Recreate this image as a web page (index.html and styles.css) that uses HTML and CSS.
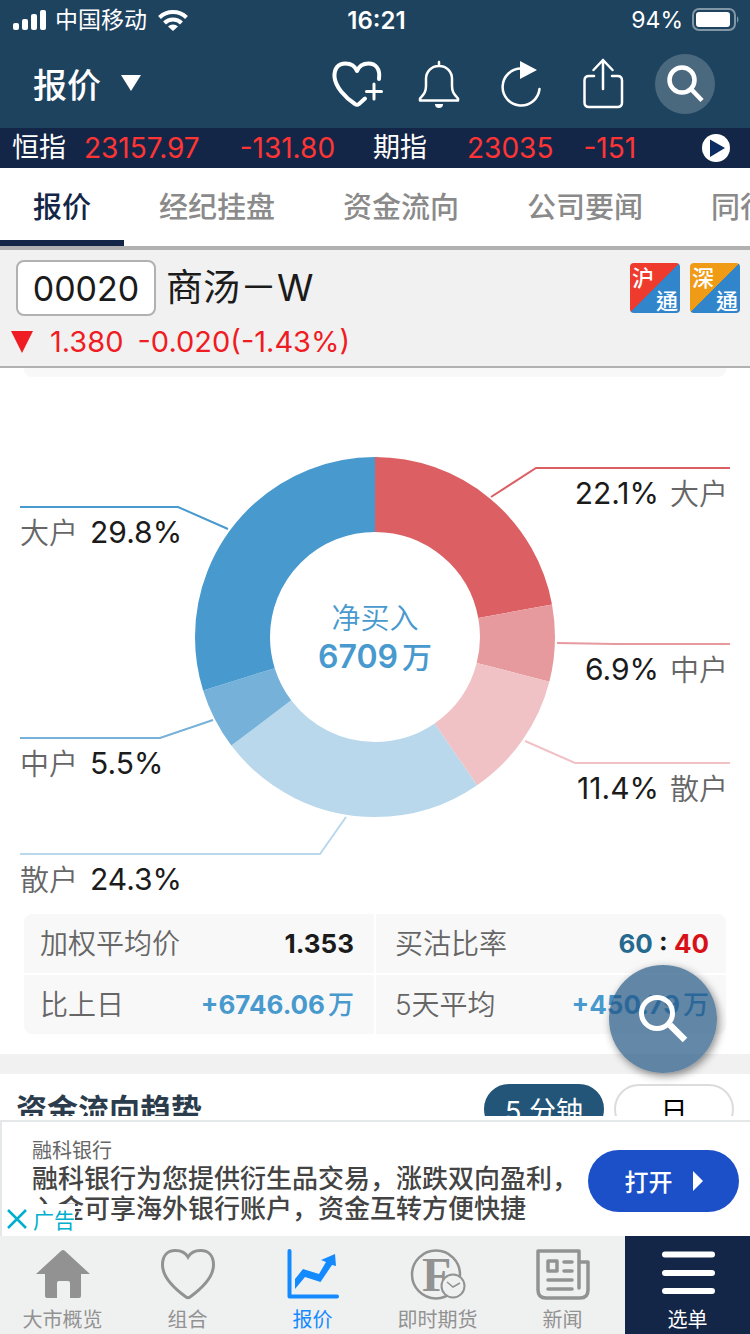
FILE: index.html
```html
<!DOCTYPE html>
<html lang="zh-CN">
<head>
<meta charset="utf-8">
<meta name="viewport" content="width=device-width, initial-scale=1">
<title>报价 - 商汤－W</title>
<link rel="stylesheet" href="styles.css">
</head>
<body>
<div class="app">
  <header class="top">
    <div class="status">
      <div class="status-left">
        <svg class="signal" viewBox="0 0 34 22" aria-hidden="true"><rect x="0" y="14" width="6" height="7" rx="2"/><rect x="9" y="10" width="6" height="11" rx="2"/><rect x="18" y="5" width="6" height="16" rx="2"/><rect x="27" y="1" width="6" height="20" rx="2"/></svg>
        <span class="carrier">中国移动</span>
        <svg class="wifi" viewBox="0 0 30 22" aria-hidden="true"><g fill="none" stroke="#fff" stroke-width="4"><path d="M1.500 8.500a19.500 19.500 0 0 1 27 0"/><path d="M6.500 14a12 12 0 0 1 17 0"/></g><path fill="#fff" d="M10 17.500a7 7 0 0 1 10 0L15 22z"/></svg>
      </div>
      <time class="clock">16:21</time>
      <div class="status-right">
        <span>94%</span>
        <svg class="battery" viewBox="0 0 48 24" aria-hidden="true"><rect x="1" y="1" width="42" height="21" rx="6" fill="none" stroke="#8197a5" stroke-width="2"/><rect x="4" y="4" width="34" height="15" rx="3" fill="#fff"/><path d="M45 8q3 3.500 0 7z" fill="#8197a5"/></svg>
      </div>
    </div>
    <div class="toolbar">
      <button class="picker" type="button">报价<svg viewBox="0 0 20 16" aria-hidden="true"><path d="M0 0h20L10 16z" fill="#fff"/></svg></button>
      <div class="actions">
        <button type="button" aria-label="加入组合"><svg viewBox="0 0 60 60"><path stroke-width="4" d="M52 25C53.500 14 48 9.500 41.500 9.500 36 9.500 32 12 30 17 28 12 24 9.500 18.500 9.500 11.500 9.500 7 14 7.500 23 8.500 33 18 43.500 28 50Q30 51.500 32 50L38 44.500"/><path stroke-width="3" d="M47 30v15M39.500 37.500h15"/></svg></button>
        <button type="button" aria-label="提醒"><svg viewBox="0 0 60 60"><path stroke-width="2.500" d="M30 8v4M30 12C22 12 17 18 17 25V32C17 38 15 40 11 44.500V46.500H49V44.500C45 40 43 38 43 32V25C43 18 38 12 30 12z"/><path fill="#fff" stroke="none" d="M26 50h8a4 4 0 0 1-8 0z"/></svg></button>
        <button type="button" aria-label="刷新"><svg viewBox="0 0 60 60"><path stroke-width="2.500" d="M30 14.500A18.500 18.500 0 1 0 48.500 35"/><path fill="#fff" stroke="none" d="M29 7l17 9-17 9z"/></svg></button>
        <button type="button" aria-label="分享"><svg viewBox="0 0 60 60"><path stroke-width="2.500" d="M21 22h-5q-4.500 0-4.500 4.500v22q0 4.500 4.500 4.500h28.500q4.500 0 4.500-4.500v-22q0-4.500-4.500-4.500h-5.500M30 35V6M20.500 16L30 6l9.500 10"/></svg></button>
        <button class="round" type="button" aria-label="搜索"><svg viewBox="0 0 60 60"><circle cx="27" cy="26" r="12.500" stroke-width="4.500"/><path stroke-width="4.500" stroke-linecap="butt" d="M36 35l11 11.500"/></svg></button>
      </div>
    </div>
  </header>

  <div class="ticker">
    <div class="index"><span>恒指</span><b>23157.97</b></div>
    <b class="move">-131.80</b>
    <div class="index future"><span>期指</span><b>23035</b></div>
    <b class="move">-151</b>
    <button class="play" type="button" aria-label="播放"><svg viewBox="0 0 28 28"><circle cx="14" cy="14" r="14" fill="#fff"/><path d="M8 5.500L23 14 8 23z" fill="#0b2b63"/></svg></button>
  </div>

  <nav class="tabs">
    <a class="tab current" href="#quote">报价</a>
    <a class="tab" href="#broker">经纪挂盘</a>
    <a class="tab" href="#flow">资金流向</a>
    <a class="tab" href="#news">公司要闻</a>
    <a class="tab" href="#peers">同行比较</a>
  </nav>

  <section class="stock">
    <div class="stock-name">
      <input class="code" type="text" value="00020" aria-label="股票代号">
      <h1>商汤－W</h1>
      <div class="badges" lang="zh-TW">
        <span class="badge red"><i>沪</i><i>通</i></span>
        <span class="badge orange"><i>深</i><i>通</i></span>
      </div>
    </div>
    <div class="price"><svg viewBox="0 0 24 24" aria-hidden="true"><path d="M1 1h22L12 23z"/></svg><span class="last">1.380</span><span>-0.020(-1.43%)</span></div>
  </section>

  <main class="content">
    <div class="sheet">
      <div class="card-end"></div>
      <svg class="chart" viewBox="0 0 750 537" role="img" aria-label="净买入 6709 万">
        <g class="ring" transform="rotate(-90 375 260)">
          <circle class="r1" cx="375" cy="260" r="142.500" pathLength="100" stroke-dasharray="22.100 77.900"/>
          <circle class="r2" cx="375" cy="260" r="142.500" pathLength="100" stroke-dasharray="6.900 93.100" stroke-dashoffset="-22.100"/>
          <circle class="r3" cx="375" cy="260" r="142.500" pathLength="100" stroke-dasharray="11.400 88.600" stroke-dashoffset="-29"/>
          <circle class="b3" cx="375" cy="260" r="142.500" pathLength="100" stroke-dasharray="24.300 75.700" stroke-dashoffset="-40.400"/>
          <circle class="b2" cx="375" cy="260" r="142.500" pathLength="100" stroke-dasharray="5.500 94.500" stroke-dashoffset="-64.700"/>
          <circle class="b1" cx="375" cy="260" r="142.500" pathLength="100" stroke-dasharray="29.800 70.200" stroke-dashoffset="-70.200"/>
        </g>
        <g class="leaders">
          <path class="r1" d="M491 120l45-29h194"/>
          <path class="r2" d="M557 266l58 1h115"/>
          <path class="r3" d="M525 364l50 22h155"/>
          <path class="b1" d="M228 152l-50-22H20"/>
          <path class="b2" d="M213 343l-53 18H20"/>
          <path class="b3" d="M346 440l-26 37H20"/>
        </g>
        <g class="pct" text-anchor="end">
          <text x="659" y="127">22.1%</text><text x="659" y="303">6.9%</text><text x="659" y="422">11.4%</text>
        </g>
        <g class="pct">
          <text x="90" y="166">29.8%</text><text x="90" y="397">5.5%</text><text x="90" y="513">24.3%</text>
        </g>
        <g class="who">
          <text x="670" y="128">大户</text><text x="670" y="304">中户</text><text x="670" y="423">散户</text>
          <text x="20" y="167">大户</text><text x="20" y="398">中户</text><text x="20" y="514">散户</text>
        </g>
        <g class="net" text-anchor="middle">
          <text class="net-label" x="375" y="252">净买入</text>
          <text class="net-value" x="375" y="291">6709<tspan dx="4">万</tspan></text>
        </g>
      </svg>
      <dl class="stats">
        <div><dt>加权平均价</dt><dd>1.353</dd></div>
        <div><dt>买沽比率</dt><dd><span class="buy">60</span> : <span class="sell">40</span></dd></div>
        <div><dt>比上日</dt><dd class="up">+6746.06<span class="unit">万</span></dd></div>
        <div><dt>5天平均</dt><dd class="up">+450.79<span class="unit">万</span></dd></div>
      </dl>
      <section class="trend">
        <h2>资金流向趋势</h2>
        <button class="pill on" type="button">5 分钟</button>
        <button class="pill" type="button">日</button>
      </section>
    </div>
    <button class="fab" type="button" aria-label="搜索"><svg viewBox="0 0 60 60"><circle cx="24" cy="24" r="15.500" fill="none" stroke="#fff" stroke-width="5"/><path stroke="#fff" stroke-width="6.500" d="M37 36L52 51"/></svg></button>
  </main>

  <aside class="ad">
    <div class="ad-copy">
      <p class="advertiser">融科银行</p>
      <p class="pitch">融科银行为您提供衍生品交易，涨跌双向盈利，<br>入金可享海外银行账户，资金互转方便快捷</p>
    </div>
    <a class="open" href="#open">打开<svg viewBox="0 0 10 20" aria-hidden="true"><path d="M0 0l10 10L0 20z" fill="#fff"/></svg></a>
    <button class="ad-tag" type="button"><svg viewBox="0 0 20 20" aria-hidden="true"><path d="M1 1l18 18M19 1L1 19" stroke="#00aecd" stroke-width="2.500"/></svg>广告</button>
  </aside>

  <nav class="dock">
    <a href="#market"><svg viewBox="0 0 56 52"><path fill="#929292" d="M26 3q2-2 4 0L55 26H46V48q0 2-2 2H35V35q0-2-2-2H24q-2 0-2 2V50H12q-2 0-2-2V26H1z"/></svg>大市概览</a>
    <a href="#portfolio"><svg viewBox="0 0 56 52"><path fill="none" stroke="#929292" stroke-width="3" d="M28 9C25 4 20 2.500 15.500 2.500 7 2.500 2.500 8 2.500 17 2.500 30 15 41 26 49Q28 50.500 30 49C41 41 53.500 30 53.500 17 53.500 8 49 2.500 40.500 2.500 36 2.500 31 4 28 9z"/></svg>组合</a>
    <a class="here" href="#quote"><svg viewBox="0 0 56 52"><path fill="none" stroke="#148aff" stroke-width="4" stroke-linecap="round" stroke-linejoin="round" d="M4.500 3V48.500H52"/><path fill="#148aff" d="M10 31L18 21 34 26 41 14 36 12 50 6 51 18 47 17 35.500 34 20 29 10 41z"/></svg>报价</a>
    <a href="#futures"><svg viewBox="0 0 56 52"><circle cx="26" cy="26.500" r="24" fill="none" stroke="#929292" stroke-width="2.500"/><text class="f-mark" x="12" y="43">F</text><circle cx="43" cy="38" r="11.500" fill="#eff0f0" stroke="#929292" stroke-width="2"/><path fill="none" stroke="#929292" stroke-width="1.500" d="M37 34l6 5 7-4"/></svg>即时期货</a>
    <a href="#newsroom"><svg viewBox="0 0 56 52"><g fill="none" stroke="#929292" stroke-width="3.500" stroke-linejoin="round" stroke-linecap="round"><path d="M44 40V3H3V42q0 8 8 8H45q8 0 8-8V14H44"/><path d="M13 13h9v10h-9zM29 14h8M29 23h8M13 32h24M13 41h24"/></g></svg>新闻</a>
    <a class="menu" href="#menu"><svg viewBox="0 0 56 52"><path stroke="#fff" stroke-width="6" stroke-linecap="round" d="M5 6.500h47M5 25h47M5 43h47"/></svg>选单</a>
  </nav>
</div>
</body>
</html>
```
FILE: styles.css
```css
* { box-sizing: border-box; }
body {
  margin: 0;
  font-family: Inter, "Noto Sans CJK SC", sans-serif;
  color: #1b1b1b;
  background: #fff;
}
button, input { font: inherit; color: inherit; }
button { border: 0; padding: 0; background: none; }
a { color: inherit; text-decoration: none; }
svg { display: block; }
h1, h2, p, dl, dd { margin: 0; }
i { font-style: normal; }
b { font-weight: 400; }

.app { display: flex; flex-direction: column; height: 100vh; overflow: hidden; }
.app > * { flex: none; }

.top { background: #1e435f; color: #fff; }
.status {
  display: grid;
  grid-template-columns: 1fr auto 1fr;
  align-items: center;
  height: 40px;
  padding: 0 10px 0 13px;
  font-size: 23px;
}
.status-left, .status-right { display: flex; align-items: center; }
.status-right { justify-content: flex-end; gap: 9px; }
.signal { width: 34px; height: 22px; fill: #fff; }
.carrier { margin: 0 11px 0 8px; line-height: 32px; }
.wifi { width: 30px; height: 22px; }
.clock { font-size: 24px; font-weight: 600; }
.battery { width: 48px; height: 24px; }

.toolbar {
  display: flex;
  align-items: center;
  justify-content: space-between;
  height: 88px;
  padding: 0 35px 0 33px;
}
.picker {
  display: flex;
  align-items: center;
  gap: 20px;
  padding-bottom: 2px;
  font-size: 34px;
  font-weight: 500;
}
.picker svg { width: 20px; height: 16px; }
.actions { display: flex; gap: 22px; }
.actions svg {
  width: 60px;
  height: 60px;
  fill: none;
  stroke: #fff;
  stroke-linecap: round;
  stroke-linejoin: round;
}
.round { border-radius: 50%; background: #4b697e; }

.ticker {
  display: flex;
  align-items: center;
  height: 40px;
  padding: 0 20px 0 12px;
  font-size: 27px;
  line-height: 40px;
  color: #fff;
  background: #142647;
}
.ticker b { font-size: 28px; color: #ff3535; }
.index { display: flex; align-items: center; gap: 18px; }
.index + .move { margin-left: 40px; }
.future { gap: 40px; margin-left: 38px; }
.future + .move { margin-left: 30px; }
.play { margin-left: auto; }
.play svg { width: 28px; height: 28px; }

.tabs {
  display: flex;
  gap: 2px;
  height: 82px;
  overflow: hidden;
  border-bottom: 4px solid #b1b1b1;
  font-size: 29px;
  font-weight: 500;
  color: #8a8a8a;
}
.tab { flex: none; padding: 0 33px; border-bottom: 6px solid transparent; line-height: 80px; }
.current { color: #142647; border-color: #142647; }

.stock {
  display: flex;
  flex-direction: column;
  gap: 8px;
  height: 118px;
  padding: 10px 10px 0;
  background: #f1f1f1;
  border-bottom: 2px solid #b1b1b1;
}
.stock-name { display: flex; align-items: center; gap: 10px; height: 56px; padding-left: 6px; }
.code {
  width: 140px;
  height: 56px;
  padding: 0;
  border: 2px solid #b1b1b1;
  border-radius: 8px;
  background: #fff;
  font-size: 34px;
  text-align: center;
}
h1 { font-size: 37px; font-weight: 400; line-height: 60px; }
.badges { display: flex; gap: 10px; margin-left: auto; font-family: "Noto Sans CJK TC", sans-serif; }
.badge {
  display: flex;
  flex-direction: column;
  width: 50px;
  height: 50px;
  padding: 2px;
  border-radius: 4px;
  font-size: 22px;
  font-weight: 500;
  line-height: 23px;
  color: #fff;
}
.badge i:last-child { align-self: flex-end; }
.red { background: linear-gradient(135deg, #ee3b2e 50%, #3085cb 50%); }
.orange { background: linear-gradient(135deg, #f09b16 50%, #3085cb 50%); }
.price { display: flex; align-items: center; font-size: 29px; line-height: 36px; color: #ef1c23; }
.price svg { width: 24px; height: 24px; fill: #ef1c23; }
.last { margin: 0 14px 0 16px; }

.app > .content { position: relative; flex: 1 1 0; min-height: 0; margin-bottom: 4px; }
.sheet { height: 100%; overflow: hidden; }
.card-end { height: 9px; margin: 0 24px; border-radius: 0 0 8px 8px; background: #f8f8f8; }
.chart { width: 100%; height: auto; }
.ring { fill: none; stroke-width: 75; }
.leaders { fill: none; stroke-width: 2; }
.r1 { stroke: #dc5f63; }
.r2 { stroke: #e79a9e; }
.r3 { stroke: #f1c2c5; }
.b1 { stroke: #4799ce; }
.b2 { stroke: #75b1d9; }
.b3 { stroke: #b9d8eb; }
.pct { font-size: 30px; fill: #1b1b1b; }
.who { font-size: 29px; font-weight: 350; fill: #666; }
.net { fill: #4799ce; }
.net-label { font-size: 29px; font-weight: 350; }
.net-value { font-size: 32px; font-weight: 600; }
.net-value tspan { font-size: 30px; font-weight: 500; }

.stats {
  display: grid;
  grid-template-columns: 1fr 1fr;
  gap: 2px;
  margin: 0 24px 20px;
  border-radius: 8px;
  overflow: hidden;
}
.stats div {
  display: flex;
  align-items: center;
  justify-content: space-between;
  height: 59px;
  padding: 0 20px 0 16px;
  line-height: 56px;
  background: #f8f8f8;
}
.stats div:nth-child(even) { padding: 0 17px 0 19px; }
dt { font-size: 28px; font-weight: 350; color: #666; }
dd { font-size: 26px; font-weight: 700; }
.buy { color: #25698f; }
.sell { color: #d81118; }
.up { color: #4799ce; }
.unit { margin-left: 3px; font-weight: 500; }

.trend {
  display: flex;
  align-items: flex-start;
  gap: 10px;
  padding: 10px 16px 0;
  border-top: 20px solid #f1f1f1;
}
h2 { margin-right: auto; font-size: 31px; font-weight: 700; line-height: 52px; color: #2b3c4d; }
.pill {
  width: 120px;
  height: 50px;
  padding: 0;
  border: 2px solid #dcdcdc;
  border-radius: 25px;
  font-size: 27px;
  color: #000;
}
.on { border-color: #235578; background: #235578; color: #fff; }
.fab {
  position: absolute;
  right: 33px;
  bottom: 43px;
  display: grid;
  place-items: center;
  width: 108px;
  height: 108px;
  border-radius: 50%;
  background: rgba(30, 83, 129, .69);
  box-shadow: 2px 3px 8px rgba(0, 0, 0, .45);
}
.fab svg { width: 60px; height: 60px; }

.ad {
  position: relative;
  display: flex;
  align-items: center;
  justify-content: space-between;
  height: 116px;
  padding: 3px 11px 0 30px;
  border: solid #e5e8e8;
  border-width: 2px 0 0 2px;
}
.advertiser { font-size: 20px; line-height: 26px; color: #666; }
.pitch { font-size: 26px; font-weight: 500; line-height: 30px; white-space: nowrap; color: #444; }
.open {
  display: flex;
  flex: none;
  align-items: center;
  justify-content: center;
  gap: 20px;
  width: 151px;
  height: 62px;
  border-radius: 31px;
  background: #1c50c8;
  color: #fff;
  font-size: 24px;
  font-weight: 500;
}
.open svg { width: 10px; height: 20px; }
.ad-tag {
  position: absolute;
  left: 0;
  bottom: 0;
  display: flex;
  align-items: center;
  gap: 6px;
  height: 32px;
  padding: 0 0 2px 5px;
  background: #fff;
  color: #00aecd;
  font-size: 21px;
}
.ad-tag svg { width: 20px; height: 20px; }

.dock {
  display: grid;
  grid-template-columns: repeat(6, 1fr);
  height: 98px;
  background: #eff0f0;
  color: #929292;
  font-size: 20px;
  line-height: 24px;
}
.dock a { display: flex; flex-direction: column; align-items: center; gap: 8px; padding-top: 12px; }
.dock svg { width: 56px; height: 52px; }
.here { color: #148aff; }
.dock .menu { background: #142647; color: #fff; }
.f-mark { font: 700 48px "Liberation Serif", serif; fill: #929292; }
```
